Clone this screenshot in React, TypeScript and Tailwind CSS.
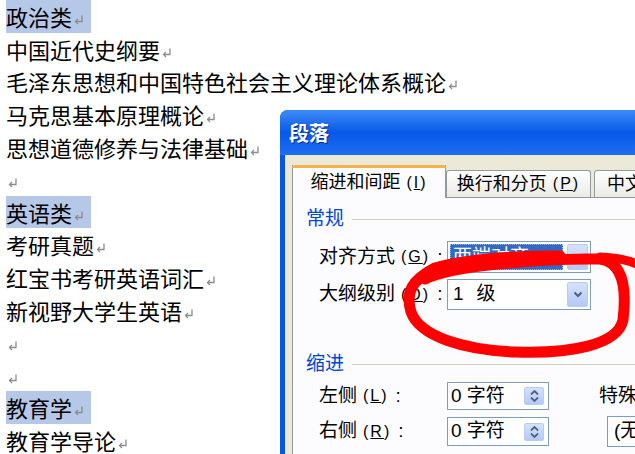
import * as React from 'react';

const docFont = { fontFamily: '"Noto Sans CJK SC", "Noto Sans", sans-serif' };
const uiFont = { fontFamily: '"Liberation Sans", "Noto Sans CJK SC", sans-serif' };

function ParaMark() {
  return (
    <svg width="12" height="12" viewBox="0 0 12 12" className="ml-[1px] mt-[8px] shrink-0">
      <path d="M9 1.5 V7.5 H3" fill="none" stroke="#8c8c8c" strokeWidth="1.3" />
      <path d="M5 5 L2.5 7.5 L5 10" fill="none" stroke="#8c8c8c" strokeWidth="1.3" />
    </svg>
  );
}

type Line = { text: string; heading?: boolean };

const lines: Line[] = [
  { text: '政治类', heading: true },
  { text: '中国近代史纲要' },
  { text: '毛泽东思想和中国特色社会主义理论体系概论' },
  { text: '马克思基本原理概论' },
  { text: '思想道德修养与法律基础' },
  { text: '' },
  { text: '英语类', heading: true },
  { text: '考研真题' },
  { text: '红宝书考研英语词汇' },
  { text: '新视野大学生英语' },
  { text: '' },
  { text: '' },
  { text: '教育学', heading: true },
  { text: '教育学导论' },
];

function DocLine({ line }: { line: Line }) {
  return (
    <div className="flex h-[32.6px] items-center">
      <div className={`flex h-full items-center ${line.heading ? 'w-[85px] bg-[#b6c8e8]' : ''}`}>
        <span className="text-[22px] leading-none text-black whitespace-nowrap">{line.text}</span>
        <ParaMark />
      </div>
    </div>
  );
}

function Chevron() {
  return (
    <svg width="10" height="7" viewBox="0 0 10 7">
      <path d="M1.5 1.5 L5 5 L8.5 1.5" fill="none" stroke="#4d6185" strokeWidth="2" />
    </svg>
  );
}

function DropButton() {
  return (
    <div className="flex h-full w-[21px] items-center justify-center rounded-[2px] border border-[#b9cbf3] bg-gradient-to-b from-[#d6e2fb] to-[#b3c8f5]">
      <Chevron />
    </div>
  );
}

function SpinButton() {
  return (
    <div className="flex h-[18px] w-[20px] shrink-0 flex-col items-center justify-center gap-[2px] rounded-[2px] border border-[#b9cbf3] bg-gradient-to-b from-[#d6e2fb] to-[#b3c8f5]">
      <svg width="9" height="5" viewBox="0 0 9 5">
        <path d="M1 4.5 L4.5 1 L8 4.5" fill="none" stroke="#4d6185" strokeWidth="1.8" />
      </svg>
      <svg width="9" height="5" viewBox="0 0 9 5">
        <path d="M1 0.5 L4.5 4 L8 0.5" fill="none" stroke="#4d6185" strokeWidth="1.8" />
      </svg>
    </div>
  );
}

function Key({ k }: { k: string }) {
  return (
    <span className="ml-[6px] text-[16px] tracking-[2px]">
      (<span className="underline">{k}</span>)
    </span>
  );
}

function Label({ name, k }: { name: string; k: string }) {
  return (
    <span className="flex w-[128px] shrink-0 items-center whitespace-nowrap">
      {name}
      <Key k={k} />
      <span className="ml-[7px]">:</span>
    </span>
  );
}

function Dialog() {
  return (
    <div
      className="absolute left-[280px] top-[110px] flex h-[380px] w-[400px] flex-col overflow-hidden rounded-tl-[8px] bg-[#0a55e2]"
      style={uiFont}
    >
      <div className="flex h-[45px] shrink-0 items-center bg-gradient-to-b from-[#3d8bf8] via-[#0558e8] to-[#1f6ef2] px-[9px]">
        <span className="text-[20px] font-bold text-white [text-shadow:1px_1px_0_#0a2c8c]" style={docFont}>
          段落
        </span>
      </div>
      <div className="ml-[5px] flex flex-1 flex-col bg-[#ece9d8] pl-[7px] pt-[10px]">
        <div className="flex h-[32px] items-end text-[18px] text-black">
          <div className="relative z-10 -mb-px flex h-[33px] w-[154px] shrink-0 items-center justify-center border-x border-[#919b9c] bg-[#fcfcfe]">
            <div className="absolute left-[-1px] right-[-1px] top-0 h-[3px] rounded-t-[3px] bg-[#f3b24c]" />
            <span className="mt-[2px] flex items-center whitespace-nowrap">缩进和间距<Key k="I" /></span>
          </div>
          <div className="flex h-[27px] w-[145px] shrink-0 items-center justify-center rounded-t-[3px] border border-b-0 border-[#919b9c] bg-gradient-to-b from-white to-[#ecebe5]">
            <span className="flex items-center whitespace-nowrap">换行和分页<Key k="P" /></span>
          </div>
          <div className="ml-[3px] flex h-[27px] flex-1 items-center rounded-t-[3px] border border-b-0 border-[#919b9c] bg-gradient-to-b from-white to-[#ecebe5] pl-[12px]">
            <span className="whitespace-nowrap">中文版式</span>
          </div>
        </div>
        <div className="flex flex-1 flex-col border-l border-t border-[#919b9c] bg-[#fcfcfe] pl-[13px] pt-[11px] text-[19px] text-black">
          <div className="flex h-[20px] items-center">
            <span className="text-[#0046d5]">常规</span>
            <div className="ml-[8px] h-px flex-1 bg-[#d0d0bf]" />
          </div>
          <div className="ml-[13px] mt-[12px] flex flex-col gap-[6px]">
            <div className="flex h-[32px] items-center">
              <Label name="对齐方式" k="G" />
              <div className="flex h-full w-[144px] shrink-0 items-center border border-[#7f9db9] bg-white p-[2px]">
                <div className="flex h-full flex-1 items-center border border-dotted border-[#a0b4e0] bg-[#316ac5] px-[2px] text-white">
                  两端对齐
                </div>
                <div className="ml-[4px] h-full">
                  <DropButton />
                </div>
              </div>
            </div>
            <div className="flex h-[31px] items-center">
              <Label name="大纲级别" k="O" />
              <div className="flex h-full w-[144px] shrink-0 items-center border border-[#7f9db9] bg-white p-[2px]">
                <div className="flex flex-1 items-center pl-[3px]">
                  <span>1</span>
                  <span className="ml-[13px]">级</span>
                </div>
                <div className="h-full">
                  <DropButton />
                </div>
              </div>
            </div>
          </div>
          <div className="mt-[44px] flex h-[20px] items-center">
            <span className="text-[#0046d5]">缩进</span>
            <div className="ml-[8px] h-px flex-1 bg-[#d0d0bf]" />
          </div>
          <div className="ml-[13px] mt-[8px] flex flex-col gap-[7px]">
            <div className="flex h-[28px] items-center">
              <Label name="左侧" k="L" />
              <div className="flex h-full w-[102px] shrink-0 items-center justify-between border border-[#7f9db9] bg-white pl-[3px] pr-[4px]">
                <span className="whitespace-nowrap">0 字符</span>
                <SpinButton />
              </div>
              <span className="ml-[50px] shrink-0 whitespace-nowrap">特殊格式</span>
            </div>
            <div className="flex h-[29px] items-center">
              <Label name="右侧" k="R" />
              <div className="flex h-full w-[102px] shrink-0 items-center justify-between border border-[#7f9db9] bg-white pl-[3px] pr-[4px]">
                <span className="whitespace-nowrap">0 字符</span>
                <SpinButton />
              </div>
              <div className="ml-[58px] flex h-[31px] w-[100px] shrink-0 items-center border border-[#7f9db9] bg-white pl-[6px]">
                (无)
              </div>
            </div>
          </div>
        </div>
      </div>
    </div>
  );
}

function RedCircle() {
  return (
    <svg className="pointer-events-none absolute left-0 top-0" width="635" height="454" viewBox="0 0 635 454">
      <path
        d="M425 279 C450 266 540 258 600 259 C623 262 627 287 623 320 C618 345 570 354 515 352 C465 350 420 337 411 312 C405 292 412 280 435 268 C470 258 520 256 560 256"
        fill="none"
        stroke="#ff0000"
        strokeWidth="11"
        strokeLinecap="round"
        strokeLinejoin="round"
      />
      <path
        d="M600 257 C620 258 634 262 640 266"
        fill="none"
        stroke="#ff0000"
        strokeWidth="9"
        strokeLinecap="round"
      />
    </svg>
  );
}

export default function App() {
  return (
    <div className="relative h-[454px] w-[635px] overflow-hidden bg-white" style={docFont}>
      <div className="flex flex-col pl-[6px]">
        {lines.map((l, i) => (
          <DocLine key={i} line={l} />
        ))}
      </div>
      <Dialog />
      <RedCircle />
    </div>
  );
}
